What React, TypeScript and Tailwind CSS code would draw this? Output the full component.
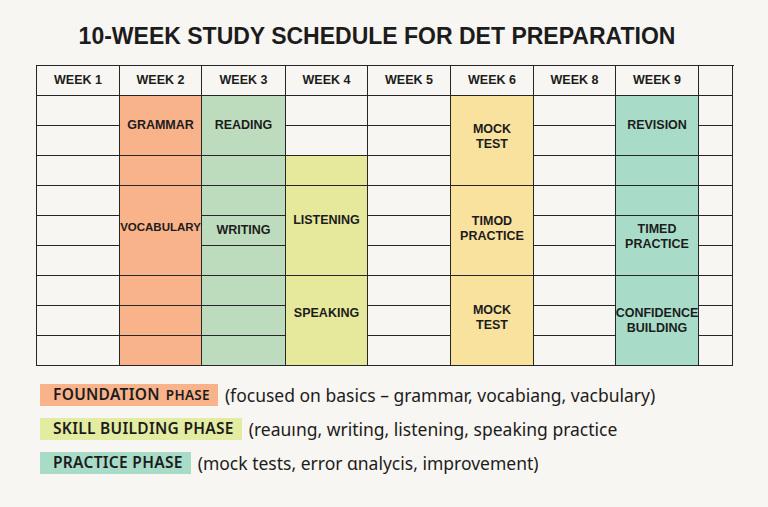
type Cell = { span: 1 | 2 | 3; label?: string[]; bg?: string; pad?: string; size?: string };

type Column = { width: string; head: string; cells: Cell[] };

const heights: Record<number, string> = {
  1: "h-[30px]",
  2: "h-[60px]",
  3: "h-[90px]",
};

const blank = (n: number): Cell[] => Array.from({ length: n }, () => ({ span: 1 }));

const ORANGE = "bg-[#f8b38a]";
const GREEN = "bg-[#bddcbd]";
const LIME = "bg-[#e6e89b]";
const YELLOW = "bg-[#f8e29e]";
const TEAL = "bg-[#a8dcc8]";

const columns: Column[] = [
  { width: "w-[83px]", head: "WEEK 1", cells: blank(9) },
  {
    width: "w-[82px]",
    head: "WEEK 2",
    cells: [
      { span: 2, label: ["GRAMMAR"], bg: ORANGE },
      { span: 1, bg: ORANGE },
      { span: 3, label: ["VOCABULARY"], bg: ORANGE, pad: "pb-[6px]", size: "text-[11.5px]" },
      { span: 1, bg: ORANGE },
      { span: 1, bg: ORANGE },
      { span: 1, bg: ORANGE },
    ],
  },
  {
    width: "w-[84px]",
    head: "WEEK 3",
    cells: [
      { span: 2, label: ["READING"], bg: GREEN },
      { span: 1, bg: GREEN },
      { span: 1, bg: GREEN },
      { span: 1, label: ["WRITING"], bg: GREEN },
      { span: 1, bg: GREEN },
      { span: 1, bg: GREEN },
      { span: 1, bg: GREEN },
      { span: 1, bg: GREEN },
    ],
  },
  {
    width: "w-[82px]",
    head: "WEEK 4",
    cells: [
      { span: 1 },
      { span: 1 },
      { span: 1, bg: LIME },
      { span: 3, label: ["LISTENING"], bg: LIME, pad: "pb-[20px]" },
      { span: 3, label: ["SPEAKING"], bg: LIME, pad: "pb-[14px]" },
    ],
  },
  { width: "w-[83px]", head: "WEEK 5", cells: blank(9) },
  {
    width: "w-[83px]",
    head: "WEEK 6",
    cells: [
      { span: 3, label: ["MOCK", "TEST"], bg: YELLOW, pad: "pb-[8px]" },
      { span: 3, label: ["TIMOD", "PRACTICE"], bg: YELLOW, pad: "pb-[4px]" },
      { span: 3, label: ["MOCK", "TEST"], bg: YELLOW, pad: "pb-[6px]" },
    ],
  },
  { width: "w-[82px]", head: "WEEK 8", cells: blank(9) },
  {
    width: "w-[83px]",
    head: "WEEK 9",
    cells: [
      { span: 2, label: ["REVISION"], bg: TEAL },
      { span: 1, bg: TEAL },
      { span: 1, bg: TEAL },
      { span: 2, label: ["TIMED", "PRACTICE"], bg: TEAL, pad: "pb-[18px]" },
      { span: 3, label: ["CONFIDENCE", "BUILDING"], bg: TEAL },
    ],
  },
  { width: "w-[34px]", head: "", cells: blank(9) },
];

const legend = [
  {
    badge: (
      <>
        FOUNDATION <span className="ml-[6px] text-[13.5px]">PHASE</span>
      </>
    ),
    bg: "bg-[#f8b38a]",
    text: "(focused on basics – grammar, vocabiang, vacbulary)",
  },
  {
    badge: <>SKILL BUILDING PHASE</>,
    bg: "bg-[#e4eca2]",
    text: "(reauıng, writing, listening, speaking practice",
  },
  {
    badge: <>PRACTICE PHASE</>,
    bg: "bg-[#a8dcc8]",
    text: "(mock tests, error ɑnalycis, improvement)",
  },
];

function ScheduleColumn({ col }: { col: Column }) {
  return (
    <div className={`flex flex-col ${col.width}`}>
      <div className="flex h-[30px] items-center justify-center border-b-[1.5px] border-r-[1.5px] border-[#262626] text-[12.5px] font-bold">
        {col.head}
      </div>
      {col.cells.map((cell, i) => (
        <div
          key={i}
          className={`flex flex-col items-center justify-center border-b-[1.5px] border-r-[1.5px] border-[#262626] text-center font-bold leading-[15px] ${heights[cell.span]} ${cell.bg ?? ""} ${cell.pad ?? ""} ${cell.size ?? "text-[12.5px]"}`}
        >
          {cell.label?.map((line) => (
            <span key={line}>{line}</span>
          ))}
        </div>
      ))}
    </div>
  );
}

export default function App() {
  return (
    <div className="min-h-[507px] w-[768px] bg-[#f8f6f2] text-[#1c1c1c] [font-family:'Liberation_Sans',Arial,sans-serif]">
      {/* Title */}
      <h1 className="pr-[14px] pt-[22px] text-center text-[23px] font-bold leading-[28px]">
        10-WEEK STUDY SCHEDULE FOR DET PREPARATION
      </h1>

      {/* Weekly grid */}
      <div className="ml-[36px] mt-[15px] flex w-[697.5px] border-l-[1.5px] border-t-[1.5px] border-[#262626]">
        {columns.map((col, i) => (
          <ScheduleColumn key={i} col={col} />
        ))}
      </div>

      {/* Phase legend */}
      <div className="ml-[40px] mt-[18px] flex flex-col gap-[12px] [font-family:'Noto_Sans',sans-serif]">
        {legend.map((item, i) => (
          <div key={i} className="flex h-[22px] items-center gap-[7px]">
            <div
              className={`flex h-[22px] items-center pl-[13px] pr-[8px] text-[15.5px] font-semibold tracking-[0.3px] text-[#1c1c1c] ${item.bg}`}
            >
              {item.badge}
            </div>
            <span className="text-[17.5px] text-[#1c1c1c]">{item.text}</span>
          </div>
        ))}
      </div>
    </div>
  );
}
